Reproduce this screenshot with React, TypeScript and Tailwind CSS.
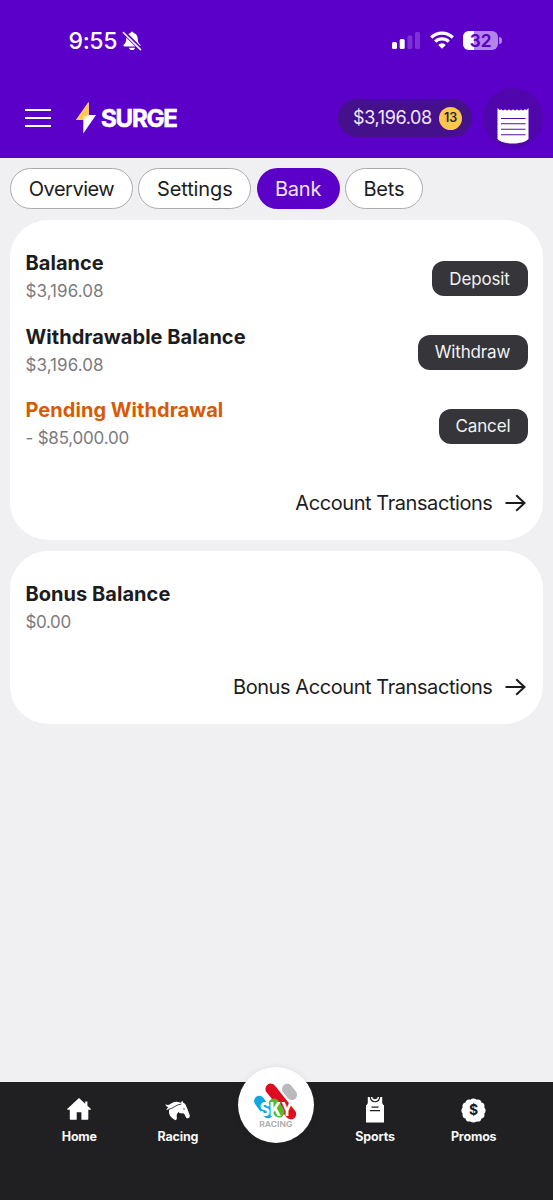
import type { ReactNode } from "react";

function BellOff() {
  return (
    <svg width="20" height="20" viewBox="0 0 20 20" className="absolute left-[122px] top-[31px]">
      <path
        d="M10 .8c-.9 0-1.500.6-1.600 1.300C5.700 2.800 4.400 5 4.300 7.500c-.1 3.500-.9 4.800-2.400 6-.9.8-.5 1.900.6 1.900h15c1.100 0 1.500-1.100.6-1.900-1.500-1.200-2.300-2.500-2.400-6-.1-2.500-1.400-4.700-4.100-5.400C11.500 1.400 10.900.8 10 .8Z"
        fill="#fff"
      />
      <path d="M7 16.700h6c-.3 1.500-1.400 2.400-3 2.400s-2.700-.9-3-2.400Z" fill="#fff" />
      <path d="M1.400.9 19 18.500" stroke="#5b00c8" strokeWidth="4" />
      <path d="M1.400 1.500 18.500 18.600" stroke="#fff" strokeWidth="1.600" strokeLinecap="round" />
    </svg>
  );
}

function StatusBar() {
  return (
    <div className="relative h-[78px]">
      <span className="absolute left-[68.500px] top-[27px] text-[23px] leading-[28px] font-medium tracking-[-0.300px] text-white">9:55</span>
      <BellOff />
      <svg width="28" height="18" viewBox="0 0 28 18" className="absolute left-[392px] top-[32px]" fill="#fff">
        <rect x="0" y="10" width="5" height="7" rx="1.500" />
        <rect x="7.700" y="7" width="5" height="10" rx="1.500" />
        <rect x="15.400" y="3.500" width="5" height="13.500" rx="1.500" opacity=".2" />
        <rect x="23" y="0" width="5" height="17" rx="1.500" opacity=".2" />
      </svg>
      <svg width="24" height="18" viewBox="0 0 24 18" className="absolute left-[429.500px] top-[31px]" fill="none" stroke="#fff" strokeWidth="3.200">
        <path d="M1.200 6.500a15.600 15.600 0 0 1 21.600 0" />
        <path d="M5.200 10.600a9.900 9.900 0 0 1 13.600 0" />
        <path d="M12 17.700 8.200 13.900a5.400 5.400 0 0 1 7.600 0Z" fill="#fff" stroke="none" />
      </svg>
      <div className="absolute left-[463px] top-[31px] flex h-[19px] w-[35px] items-center justify-center overflow-hidden rounded-[6px] bg-[#b385e8]">
        <div className="absolute left-0 top-0 h-full w-[11px] bg-white" />
        <span className="relative pt-px text-[17px] leading-[19px] font-bold text-[#5b00c8]">32</span>
      </div>
      <div className="absolute left-[499px] top-[37px] h-[7px] w-[2.500px] rounded-r-full bg-[#b385e8]" />
    </div>
  );
}

function Receipt() {
  return (
    <svg width="32" height="37" viewBox="0 0 32 37" className="mt-[19.500px]">
      <path
        d="M.5 0 2.500 2 4.200 1.300C5.200 2.800 7 2.800 8 1.300 9 2.800 11 2.800 12 1.300c1 1.500 3 1.500 4 0 1 1.500 3 1.500 4 0 1 1.500 3 1.500 4 0 1 1.500 2.800 1.500 3.800 0L29.500 2l2-2v31C26 37 6 37 .5 31Z"
        fill="#fff"
      />
      <path d="M4 10.500h24.500M4 15.800h24.500M4 21.300h24.500M4 26.800h24.500" stroke="#51109f" strokeWidth="1.100" />
    </svg>
  );
}

function AppBar() {
  return (
    <div className="flex h-[80px] items-center">
      <div className="ml-[25px] flex w-[25.500px] flex-col gap-[6px]">
        <div className="h-[2.200px] bg-white" />
        <div className="h-[2.200px] bg-white" />
        <div className="h-[2.200px] bg-white" />
      </div>
      <svg width="20" height="32" viewBox="0 0 20 32" className="ml-[25.500px]">
        <path d="M12.700 0v13H20L7.300 31.500V18H0Z" fill="#fff" />
        <path d="M12.700 0v13L7.300 18H0Z" fill="#fdc755" />
        <path d="M12.700 13 7.300 18v-3.500Z" fill="#ffe4b0" />
      </svg>
      <span className="ml-[5px] w-[80px] pt-px text-[24px] leading-[30px] font-bold tracking-[-1.200px] text-white [-webkit-text-stroke:0.600px_white]">SURGE</span>
      <div className="ml-auto flex h-[38px] w-[134px] items-center rounded-full bg-[#45108b] pl-[15px]">
        <span className="w-[86px] text-[18px] leading-[24px] tracking-[-0.380px] text-[#f0e9f9]">$3,196.08</span>
        <span className="flex size-[23px] items-center justify-center rounded-full bg-[#fdc64d] text-[12.500px] font-semibold text-[#1f1f22]">13</span>
      </div>
      <div className="ml-[11px] mr-[10px] flex size-[60px] justify-center rounded-full bg-[#5106ad]">
        <Receipt />
      </div>
    </div>
  );
}

function Tab({ label, width, active, tracking }: { label: string; width: string; active?: boolean; tracking?: string }) {
  return (
    <button
      className={`${width} ${tracking ?? ""} flex h-[41px] shrink-0 items-center justify-center rounded-full text-[20px] ${
        active ? "bg-[#5b00c8] text-[#eee5fa]" : "border border-[#aaaaad] bg-white text-[#1c1c1e]"
      }`}
    >
      {label}
    </button>
  );
}

type BalanceRowProps = {
  title: string;
  amount: string;
  action?: string;
  width?: string;
  tone?: string;
  amountTracking?: string;
};

function BalanceRow({ title, amount, action, width, tone, amountTracking }: BalanceRowProps) {
  return (
    <div className="flex h-[73.700px] items-start justify-between">
      <div>
        <div className={`h-[28px] text-[20px] leading-[28px] font-bold tracking-[0.040px] ${tone ?? "text-[#1c1c1e]"}`}>{title}</div>
        <div className={`text-[17px] leading-[28px] text-[#7b7b7f] ${amountTracking ?? "tracking-[0.050px]"}`}>{amount}</div>
      </div>
      {action && (
        <button className={`${width} mt-[12.300px] flex h-[35px] items-center justify-center rounded-[12px] bg-[#363539] pt-px text-[17px] tracking-[-0.150px] text-[#f3f3f5]`}>
          {action}
        </button>
      )}
    </div>
  );
}

function TransactionsLink({ label }: { label: string }) {
  return (
    <a className="flex items-center justify-end gap-[12px] text-[20px] leading-[28px] tracking-[-0.430px] text-[#1c1c1e]">
      <span>{label}</span>
      <svg width="23" height="18" viewBox="0 0 23 18" fill="none" stroke="#1c1c1e" strokeWidth="2">
        <path d="M.5 9h19.200M11.200 1.200 19.500 9l-8.300 7.800" />
      </svg>
    </a>
  );
}

function NavItem({ label, children }: { label: string; children: ReactNode }) {
  return (
    <div className="flex flex-1 flex-col items-center pt-[13px]">
      <div className="flex h-[30px] items-center justify-center">{children}</div>
      <span className="mt-[4px] text-[12.500px] leading-[16px] font-bold tracking-[-0.180px] text-[#f7f7f8]">{label}</span>
    </div>
  );
}

function SkyRacing() {
  return (
    <div className="mt-[-15.500px] flex size-[76px] items-center justify-center rounded-full bg-white shadow-[0_0_6px_rgba(0,0,0,0.08)]">
      <svg width="76" height="76" viewBox="238.500 1066.500 76 76">
        <g fill="none" strokeLinecap="round">
          <path d="M287.700 1088.500 292.300 1094.300" stroke="#b9b9bb" strokeWidth="10.500" />
          <path d="M259.800 1100.500 268.500 1112.500" stroke="#13a6df" strokeWidth="10.500" />
          <path d="M271.300 1088.500 291.300 1113.500" stroke="#df0b20" strokeWidth="10.800" />
          <path d="M274.500 1103.500 279.500 1111.500" stroke="#55b82f" strokeWidth="11" />
        </g>
        <text x="260.200" y="1115.500" textLength="33" lengthAdjust="spacingAndGlyphs" fontFamily="Inter" fontWeight="800" fontSize="18.500" fill="#fff">SKY</text>
        <text x="259.800" y="1126.300" textLength="33" lengthAdjust="spacingAndGlyphs" fontFamily="Inter" fontWeight="600" fontSize="7.700" fill="#aaaaac">RACING</text>
      </svg>
    </div>
  );
}

function BottomNav() {
  return (
    <nav className="flex h-[118px] items-start bg-[#202022] px-[30px]">
      <NavItem label="Home">
        <svg width="24" height="22" viewBox="0 0 24 22" fill="#fff" className="mt-[-2px]">
          <path d="M12 0 .4 10.700c-.5.500-.2 1.100.4 1.100h2v9c0 .7.400 1 1 1h5.900v-7.500h4.700v7.500h5.900c.6 0 1-.3 1-1v-9h2c.6 0 .8-.6.4-1.100l-3.300-3V3.500h-2.200v2.200Z" />
        </svg>
      </NavItem>
      <NavItem label="Racing">
        <svg width="25" height="21" viewBox="24 28 75 63" className="mt-px">
          <path
            d="M76 30 71 36C58 31 47 34 39 41 34 44 29 43 25 41c1 5 5 8 9 8-3 3-5 6-6 10 3-2 6-3 9-3-4 14 4 27 20 33 3-4 3-8 2-13 0-5 2-9 6-12 2 4 8 5 14 4 4 3 5 6 7 10 2 5 5 6 9 4 3-1 4-5 3-9-3-9-7-17-10-26-2-6-5-9-9-11Z"
            fill="#fff"
          />
          <path d="M34 56c15-2 22-14 39-16" fill="none" stroke="#202022" strokeWidth="2.600" />
          <circle cx="81" cy="55" r="2" fill="#202022" />
        </svg>
      </NavItem>
      <div className="flex flex-1 justify-center">
        <SkyRacing />
      </div>
      <NavItem label="Sports">
        <svg width="20" height="26" viewBox="0 0 20 26">
          <path d="M2.800 0h14.400v5c0 1.800.5 2.800 1.800 3.200V25.500H1V8.200C2.300 7.800 2.800 6.800 2.800 5Z" fill="#fff" />
          <path d="M7.300 0h5.400c-.5 3-4.900 3-5.400 0Z" fill="#202022" />
          <path d="M5.300 0c.4 6.300 9 6.300 9.400 0" fill="none" stroke="#202022" strokeWidth="1.200" />
          <path d="M6.500 10.200h7M5 13.700h10" stroke="#202022" strokeWidth="1.300" />
        </svg>
      </NavItem>
      <NavItem label="Promos">
        <div className="relative flex size-[25px] items-center justify-center">
          <svg width="25" height="25" viewBox="0 0 25 25" className="absolute" fill="#fff">
            <circle cx="12.500" cy="12.500" r="10.800" />
            <circle cx="12.500" cy="4" r="3.600" />
            <circle cx="16.800" cy="5.100" r="3.600" />
            <circle cx="19.900" cy="8.200" r="3.600" />
            <circle cx="21" cy="12.500" r="3.600" />
            <circle cx="19.900" cy="16.800" r="3.600" />
            <circle cx="16.800" cy="19.900" r="3.600" />
            <circle cx="12.500" cy="21" r="3.600" />
            <circle cx="8.200" cy="19.900" r="3.600" />
            <circle cx="5.100" cy="16.800" r="3.600" />
            <circle cx="4" cy="12.500" r="3.600" />
            <circle cx="5.100" cy="8.200" r="3.600" />
            <circle cx="8.200" cy="5.100" r="3.600" />
          </svg>
          <span className="relative text-[14px] leading-none font-bold text-[#202022]">$</span>
        </div>
      </NavItem>
    </nav>
  );
}

export default function App() {
  return (
    <div className="flex h-[1200px] w-[553px] flex-col overflow-hidden bg-[#f0f0f3] font-['Inter',sans-serif]">
      <header className="h-[158px] shrink-0 bg-[#5b00c8]">
        <StatusBar />
        <AppBar />
      </header>
      <main className="flex-1 px-[10px] pt-[10px]">
        <div className="flex gap-[5.300px]">
          <Tab label="Overview" width="w-[123px]" tracking="tracking-[-0.500px]" />
          <Tab label="Settings" width="w-[113px]" tracking="tracking-[-0.120px]" />
          <Tab label="Bank" width="w-[83px]" tracking="tracking-[-0.200px]" active />
          <Tab label="Bets" width="w-[78px]" tracking="tracking-[-0.200px]" />
        </div>
        <section className="mt-[10.500px] h-[320.700px] rounded-[38px] bg-white px-[15.500px] pt-[29.500px]">
          <BalanceRow title="Balance" amount="$3,196.08" action="Deposit" width="w-[96px]" />
          <BalanceRow title="Withdrawable Balance" amount="$3,196.08" action="Withdraw" width="w-[110px]" />
          <BalanceRow title="Pending Withdrawal" amount="- $85,000.00" action="Cancel" width="w-[89px]" tone="text-[#d75a06]" amountTracking="tracking-[-0.220px]" />
          <div className="mt-[19px]">
            <TransactionsLink label="Account Transactions" />
          </div>
        </section>
        <section className="mt-[10.500px] h-[173.500px] rounded-[38px] bg-white px-[15.500px] pt-[29.500px]">
          <BalanceRow title="Bonus Balance" amount="$0.00" amountTracking="tracking-[-0.350px]" />
          <div className="mt-[19px]">
            <TransactionsLink label="Bonus Account Transactions" />
          </div>
        </section>
      </main>
      <BottomNav />
    </div>
  );
}
